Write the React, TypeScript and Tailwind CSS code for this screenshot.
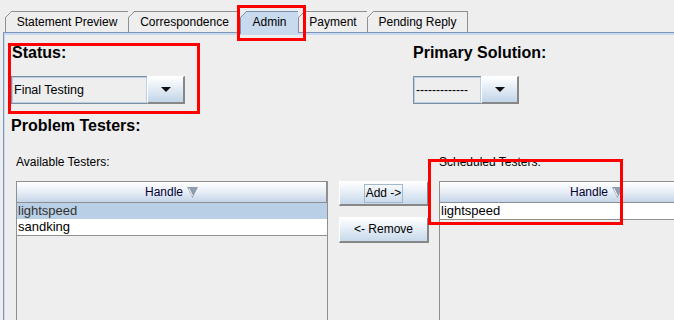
import clsx from "clsx";

const tabs = [
  { label: "Statement Preview", w: "w-[123px]" },
  { label: "Correspondence", w: "w-[112px]" },
  { label: "Admin", w: "w-[58px]", selected: true },
  { label: "Payment", w: "w-[69px]" },
  { label: "Pending Reply", w: "w-[101px]", last: true },
];

const Tab = ({ label, w, selected, last }: { label: string; w: string; selected?: boolean; last?: boolean }) => (
  <div
    className={clsx(
      "relative flex items-center justify-center border-l border-t text-[12px] leading-none text-black",
      w,
      last && "border-r",
      selected
        ? "z-10 -mb-[2px] h-[23px] border-[#7d8fae] bg-[#c8daee] pb-[2px]"
        : "h-[21px] border-[#8e8f8f]"
    )}
  >
    <svg className="absolute -left-px -top-px" width="7" height="7">
      <polygon points="0,0 6.5,0 0,6.5" fill="#eeeeee" />
      <line x1="0.5" y1="6.5" x2="6.5" y2="0.5" stroke={selected ? "#7d8fae" : "#8e8f8f"} />
    </svg>
    {label}
  </div>
);

const ArrowDown = () => (
  <svg width="10" height="5" viewBox="0 0 10 5">
    <polygon points="0,0 10,0 5,5" fill="#111" />
  </svg>
);

const Combo = ({ text, fieldW, dashes }: { text: string; fieldW: string; dashes?: boolean }) => (
  <div className="flex h-[28px]">
    <div
      className={clsx(
        "flex items-center border border-r-0 border-[#7b8d9f] bg-[#eeeeee] pl-[1px] shadow-[inset_0_0_0_1px_#b8cfe5]",
        fieldW,
        dashes ? "text-[12px]" : "text-[12.5px]"
      )}
    >
      <span className="pl-[1px]">{text}</span>
    </div>
    <div className="flex w-[38px] items-center justify-center border-b-2 border-l border-r-2 border-t border-b-[#878787] border-l-white border-r-[#878787] border-t-white bg-linear-to-b from-white to-[#c2d5e9]">
      <ArrowDown />
    </div>
  </div>
);

const SortArrow = () => (
  <svg width="11" height="11" viewBox="0 0 11 11">
    <polygon points="0,0 11,0 5.5,11" fill="#8d9dad" />
    <line x1="2" y1="1.5" x2="5.5" y2="9" stroke="#ffffff" strokeWidth="1" />
  </svg>
);

const Table = ({ rows, w }: { rows: { name: string; selected?: boolean }[]; w: string }) => (
  <div className={clsx("h-[200px] shrink-0 border border-[#8e8f8f]", w)}>
    <div className="flex h-[21px] items-center justify-center gap-[4px] border-b border-r border-[#8e8f8f] border-t-white bg-linear-to-b from-white via-[#e8eef6] to-[#c4d5e9] text-[12px] text-[#000033]">
      <span>Handle</span>
      <SortArrow />
    </div>
    <div className="border-b border-[#8e8f8f]">
      {rows.map((r) => (
        <div
          key={r.name}
          className={clsx(
            "flex h-[16px] items-center pl-[1px] text-[13px]",
            r.selected ? "bg-[#b8cfe5] text-[#333333]" : "bg-white text-black"
          )}
        >
          {r.name}
        </div>
      ))}
    </div>
  </div>
);

const SwingButton = ({ children, h, focus }: { children: string; h: string; focus?: boolean }) => (
  <div
    className={clsx(
      "flex items-center justify-center border-b-2 border-l border-r-2 border-t border-b-[#878787] border-l-white border-r-[#878787] border-t-white bg-linear-to-b from-white to-[#c7d9eb] text-[12px] text-black",
      h
    )}
  >
    <span className={clsx("px-[1px] leading-[17px]", focus && "border border-[#a3b8cc]")}>{children}</span>
  </div>
);

export default function App() {
  return (
    <div className="relative h-[320px] w-[674px] overflow-hidden bg-[#eeeeee] font-['Liberation_Sans',Arial,sans-serif] text-black">
      <div className="flex h-[32px] items-end pl-[5px]">
        {tabs.map((t) => (
          <Tab key={t.label} {...t} />
        ))}
      </div>

      <div className="ml-[3px] h-[288px] border-l border-t border-[#7d93b9]">
        <div className="h-full border-l border-t-2 border-[#c8daee]">
          <div className="flex pt-[9px]">
            <div className="w-[408px] shrink-0 pl-[6px]">
              <div className="pl-[1px] text-[16px] font-bold leading-[18px]">Status:</div>
              <div className="mt-[14px]">
                <Combo text="Final Testing" fieldW="w-[136px]" />
              </div>
            </div>
            <div>
              <div className="text-[16px] font-bold leading-[18px]">Primary Solution:</div>
              <div className="mt-[14px]">
                <Combo text="-------------" fieldW="w-[68px]" dashes />
              </div>
            </div>
          </div>

          <div className="mt-[13px] pl-[6px] text-[16px] font-bold leading-[18px]">Problem Testers:</div>

          <div className="mt-[20px] flex items-start pl-[11px]">
            <div className="w-[312px] shrink-0">
              <div className="text-[12px] leading-[14px]">Available Testers:</div>
              <div className="mt-[12px]">
                <Table w="w-[312px]" rows={[{ name: "lightspeed", selected: true }, { name: "sandking" }]} />
              </div>
            </div>

            <div className="ml-[11px] mt-[26px] flex w-[90px] shrink-0 flex-col gap-[11px]">
              <SwingButton h="h-[25px]" focus>
                {"Add ->"}
              </SwingButton>
              <SwingButton h="h-[26px]">{"<- Remove"}</SwingButton>
            </div>

            <div className="ml-[10px] w-[316px] shrink-0">
              <div className="text-[12px] leading-[14px]">Scheduled Testers:</div>
              <div className="mt-[12px]">
                <Table w="w-[316px]" rows={[{ name: "lightspeed" }]} />
              </div>
            </div>
          </div>
        </div>
      </div>

      {/* annotation boxes */}
      <div className="absolute left-[237px] top-[5px] h-[36px] w-[69px] border-[3px] border-[#ff0000]" />
      <div className="absolute left-[8px] top-[43px] h-[71px] w-[192px] border-[3px] border-[#ff0000]" />
      <div className="absolute left-[428px] top-[159px] h-[66px] w-[195px] border-[3px] border-[#ff0000]" />
    </div>
  );
}
